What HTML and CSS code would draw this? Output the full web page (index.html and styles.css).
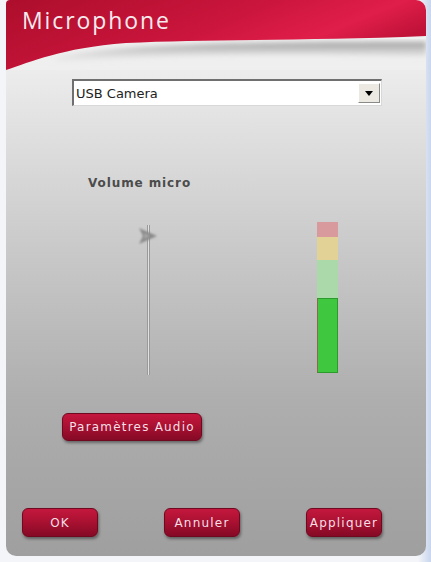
FILE: index.html
```html
<!DOCTYPE html>
<html lang="fr">
<head>
<meta charset="utf-8">
<title>Microphone</title>
<link rel="stylesheet" href="styles.css">
</head>
<body>
<div class="dialog">
  <div class="header">
    <h1 class="title">Microphone</h1>
  </div>
  <div class="select">
    <span class="select-text">USB Camera</span>
    <span class="select-btn"><span class="arrow"></span></span>
  </div>
  <div class="label">Volume micro</div>
  <div class="levels">
    <div class="slider">
      <div class="track"></div>
      <svg class="thumb" width="20" height="18" viewBox="0 0 20 18">
        <defs><filter id="bl" x="-20%" y="-20%" width="140%" height="140%"><feGaussianBlur stdDeviation="0.8"/></filter></defs>
        <path d="M1,1 L19,9 L1,17 L5,9 Z" fill="#8a8a8a" filter="url(#bl)"/>
        <path d="M6,6 L12,9 L6,12 Z" fill="#a6a6a6" filter="url(#bl)"/>
      </svg>
    </div>
    <div class="meter">
      <div class="seg seg-red"></div>
      <div class="seg seg-yellow"></div>
      <div class="seg seg-lgreen"></div>
      <div class="seg seg-green"></div>
    </div>
  </div>
  <button class="btn btn-params">Paramètres Audio</button>
  <div class="actions">
    <button class="btn btn-action">OK</button>
    <button class="btn btn-action">Annuler</button>
    <button class="btn btn-action">Appliquer</button>
  </div>
</div>
</body>
</html>
```

FILE: styles.css
```css
html, body {
  margin: 0;
  padding: 0;
}
body {
  width: 431px;
  height: 562px;
  overflow: hidden;
  background: linear-gradient(to right, #f3f5f8 0, #f3f5f8 97%, #c8d5ee 100%);
  font-family: "DejaVu Sans", Verdana, sans-serif;
}
.dialog {
  margin-left: 6px;
  width: 420px;
  height: 556px;
  border-radius: 4px 10px 10px 10px;
  overflow: hidden;
  background: linear-gradient(to bottom, #efefef 0, #ececec 72px, #e0e0e0 130px, #c9c9c9 250px, #aeaeae 400px, #9f9f9f 556px);
}
.header {
  height: 70px;
  box-sizing: border-box;
  padding: 4px 0 0 16px;
  background-image: url("data:image/svg+xml,%3Csvg xmlns='http://www.w3.org/2000/svg' width='420' height='70' viewBox='0 0 420 70'%3E%3Cdefs%3E%3ClinearGradient id='r' x1='0' y1='0' x2='1' y2='0.4'%3E%3Cstop offset='0' stop-color='%23ad0e2c'/%3E%3Cstop offset='0.55' stop-color='%23cb153c'/%3E%3Cstop offset='0.82' stop-color='%23e01e4a'/%3E%3Cstop offset='1' stop-color='%23c01238'/%3E%3C/linearGradient%3E%3ClinearGradient id='s' x1='0' y1='0' x2='0' y2='1'%3E%3Cstop offset='0' stop-color='%23888888' stop-opacity='0.8'/%3E%3Cstop offset='1' stop-color='%23d8d8d8' stop-opacity='0'/%3E%3C/linearGradient%3E%3Cfilter id='b'%3E%3CfeGaussianBlur stdDeviation='2.5'/%3E%3C/filter%3E%3C/defs%3E%3Crect width='420' height='70' fill='%23efefef'/%3E%3Cpath d='M50,58 C100,46 200,42 420,42 L420,56 C300,54 160,52 50,64Z' fill='url(%23s)' filter='url(%23b)'/%3E%3Cpath d='M0,0 H420 V36 C300,41 200,39 120,43 C55,48 25,62 0,70 Z' fill='url(%23r)'/%3E%3C/svg%3E");
  background-repeat: no-repeat;
}
.title {
  margin: 0;
  font-family: "Open Sans", "DejaVu Sans", sans-serif;
  font-weight: 400;
  font-size: 23px;
  line-height: 32px;
  letter-spacing: 1.9px;
  color: #f7eaee;
}
.select {
  margin: 9px 0 0 66px;
  width: 310px;
  height: 27px;
  box-sizing: border-box;
  background: #fff;
  border-top: 2px solid #6f6f6f;
  border-left: 2px solid #6f6f6f;
  border-right: 1px solid #d8d8d8;
  border-bottom: 1px solid #d8d8d8;
  display: flex;
  align-items: center;
  justify-content: space-between;
  padding: 0 1px 0 2px;
}
.select-text {
  font-family: "DejaVu Sans", Tahoma, sans-serif;
  font-size: 13px;
  color: #222;
}
.select-btn {
  width: 22px;
  height: 20px;
  box-sizing: border-box;
  background: #ebe9e1;
  border-top: 1px solid #fff;
  border-left: 1px solid #fff;
  border-right: 1px solid #8a8a8a;
  border-bottom: 1px solid #8a8a8a;
  display: flex;
  align-items: center;
  justify-content: center;
}
.arrow {
  width: 0;
  height: 0;
  border-left: 4px solid transparent;
  border-right: 4px solid transparent;
  border-top: 5px solid #000;
}
.label {
  margin: 70px 0 0 82px;
  font-family: "DejaVu Sans", Verdana, sans-serif;
  font-weight: bold;
  font-size: 12px;
  line-height: 15px;
  letter-spacing: 0.9px;
  color: #4c4c4c;
}
.levels {
  display: flex;
  align-items: flex-start;
  height: 184px;
}
.slider {
  position: relative;
  margin: 34px 0 0 132px;
  width: 20px;
  height: 150px;
  display: flex;
  justify-content: center;
}
.track {
  width: 3px;
  height: 150px;
  box-sizing: border-box;
  background: #dfe2e2;
  border-left: 1px solid #9a9a9a;
  border-right: 1px solid #9a9a9a;
}
.thumb {
  position: absolute;
  left: 0;
  top: 2px;
}
.meter {
  margin: 31px 0 0 159px;
  width: 21px;
  display: flex;
  flex-direction: column;
}
.seg { width: 100%; }
.seg-red { height: 15px; background: #d99a9e; }
.seg-yellow { height: 23px; background: #e3d295; }
.seg-lgreen { height: 38px; background: #acd9aa; }
.seg-green {
  height: 75px;
  box-sizing: border-box;
  background: #3fc73f;
  border: 1px solid #2c9a2c;
  border-left-color: #8a6a4a;
}
.btn {
  display: flex;
  align-items: center;
  justify-content: center;
  box-sizing: border-box;
  padding: 0;
  border: 1px solid #6e0920;
  border-radius: 6px;
  background: linear-gradient(to bottom, #c4173e 0%, #ab1132 45%, #850a25 100%);
  box-shadow: 1px 2px 3px rgba(0, 0, 0, 0.4);
  font-family: "DejaVu Sans", Verdana, sans-serif;
  font-size: 12px;
  letter-spacing: 1.2px;
  color: #f3dfe5;
}
.btn-params {
  margin: 38px 0 0 56px;
  width: 140px;
  height: 28px;
}
.actions {
  display: flex;
  gap: 66px;
  margin-top: 67px;
  padding-left: 16px;
}
.btn-action {
  width: 76px;
  height: 29px;
}
```
